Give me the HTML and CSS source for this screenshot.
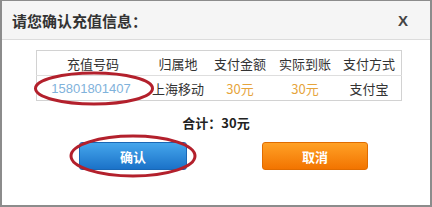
FILE: index.html
```html
<!DOCTYPE html>
<html lang="zh-CN">
<head>
    <meta charset="UTF-8">
    <title>请您确认充值信息</title>
    <link rel="stylesheet" href="styles.css">
</head>
<body>
    <div class="dialog">
        <div class="dialog-head">
            <h2>请您确认充值信息：</h2>
            <span class="close">X</span>
        </div>

        <table class="info">
            <thead>
                <tr>
                    <th class="c1">充值号码</th>
                    <th class="c2">归属地</th>
                    <th class="c3">支付金额</th>
                    <th class="c4">实际到账</th>
                    <th class="c5">支付方式</th>
                </tr>
            </thead>
            <tbody>
                <tr>
                    <td class="phone">15801801407</td>
                    <td>上海移动</td>
                    <td class="money">30元</td>
                    <td class="money">30元</td>
                    <td>支付宝</td>
                </tr>
            </tbody>
        </table>

        <p class="total">合计：30元</p>

        <div class="actions">
            <button class="btn btn-ok">确认</button>
            <button class="btn btn-cancel">取消</button>
        </div>

        <!-- marcações em vermelho -->
        <svg class="marks" viewBox="0 0 432 207" width="432" height="207">
            <ellipse cx="94" cy="88.5" rx="58.5" ry="15.5" fill="none" stroke="#b3202c" stroke-width="3"/>
            <ellipse cx="133" cy="156" rx="62" ry="20" fill="none" stroke="#b3202c" stroke-width="3"/>
        </svg>
    </div>
</body>
</html>
```

FILE: styles.css
```css
:root{
    --borda: #8c8c8c;
    --texto: #333;
    --laranja: #e6a43c;
}

body{
    margin: 0;
    background: #fff;
    font-family: "Noto Sans CJK SC", "Liberation Sans", sans-serif;
    color: var(--texto);
}

.dialog{
    position: relative;
    box-sizing: border-box;
    width: 432px;
    height: 207px;
    border: 2px solid var(--borda);
    border-top-width: 1px;
    background: #fff;
}

.dialog-head{
    height: 38px;
    display: flex;
    align-items: center;
    justify-content: space-between;
    padding: 0 22px 0 10px;
    background: #f5f5f5;
    border-bottom: 1px solid #dcdcdc;
}

.dialog-head h2{
    margin: 0;
    font-size: 15px;
    font-weight: bold;
    color: #333;
}

.close{
    font-family: "Liberation Sans", sans-serif;
    font-size: 15px;
    font-weight: bold;
    color: #444;
}

.info{
    margin: 10px 0 0 34px;
    width: 364px;
    border-collapse: collapse;
    border: 1px solid #d2d2d2;
    font-size: 13px;
    table-layout: fixed;
}

.info th,
.info td{
    height: 24px;
    padding: 0;
    text-align: center;
    font-weight: normal;
}

.info thead tr{
    border-bottom: 1px solid #dedede;
}

.c1{ width: 112px; }
.c2{ width: 58px; }
.c3{ width: 66px; }
.c4{ width: 64px; }
.c5{ width: 64px; }

.info .phone{
    color: #7fb2db;
    font-family: "Liberation Sans", sans-serif;
    padding-right: 4px;
}

.info .money{
    color: var(--laranja);
}

.total{
    margin: 12px 0 0;
    height: 20px;
    line-height: 20px;
    text-align: center;
    font-size: 13px;
    font-weight: bold;
    color: #222;
}

.actions{
    display: flex;
    gap: 75px;
    margin-top: 9px;
    padding-left: 77px;
}

.btn{
    height: 28px;
    border: none;
    border-radius: 3px;
    color: #fff;
    font-family: inherit;
    font-size: 13px;
    font-weight: bold;
    cursor: pointer;
}

.btn-ok{
    width: 108px;
    background: linear-gradient(#45a6ec, #1b72c8);
    border: 1px solid #1a67b5;
}

.btn-cancel{
    width: 106px;
    background: linear-gradient(#ffa126, #f27400);
    border: 1px solid #e06c00;
}

.marks{
    position: absolute;
    left: -2px;
    top: -1px;
    pointer-events: none;
}
```
